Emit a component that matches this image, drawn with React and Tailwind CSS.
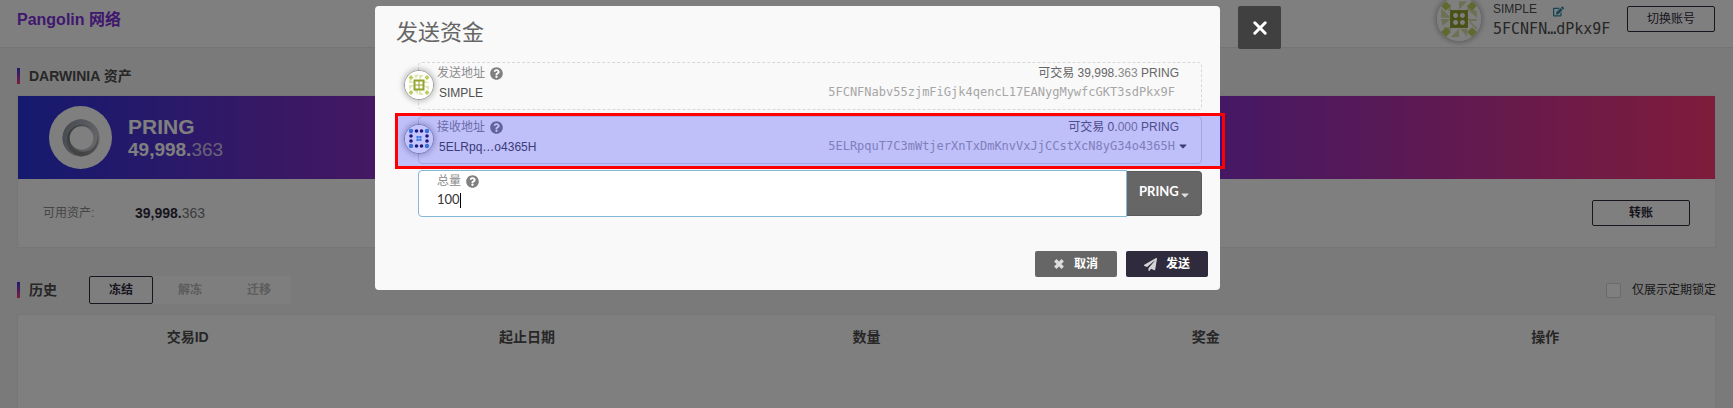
import { FaEdit, FaQuestionCircle, FaPaperPlane, FaCaretDown } from "react-icons/fa";

const columns = ["交易ID", "起止日期", "数量", "奖金", "操作"];

function SimpleIdenticon({ className }) {
  return (
    <svg viewBox="0 0 64 64" className={className} aria-hidden="true">
      <circle cx="32" cy="32" r="32" fill="#fff" />
      <path
        fill="#dbe3a8"
        d="M20 8v12h-4zM32 6h12L32 18zM44 20h12l-12-8zM6 16l14 14H6zM46 20h12v10zM6 32h14L8 42zM44 32l14 12v-12zM58 34v14L46 36zM20 58l12-12v12zM34 46h10v12zM20 44H8l12 6z"
      />
      <path
        fill="#c3d161"
        d="M13 6l7 7-7 7-7-7zM51 6l7 7-7 7-7-7zM13 44l7 7-7 7-7-7zM51 44l7 7-7 7-7-7z"
      />
      <rect x="19" y="19" width="26" height="26" fill="#94a32c" />
      <g fill="#fff">
        <circle cx="27" cy="27" r="3.6" />
        <circle cx="37" cy="27" r="3.6" />
        <circle cx="27" cy="37" r="3.6" />
        <circle cx="37" cy="37" r="3.6" />
      </g>
    </svg>
  );
}

function SmallIdenticon({ className }) {
  return (
    <svg viewBox="0 0 28 28" className={className} aria-hidden="true">
      <circle cx="14" cy="14" r="14" fill="#fff" />
      <path
        fill="#dfe7b8"
        d="M4 8l5 4H4zM9 4l5-1-3 5zM14 4h5l-5 5zM19 9l5 3h-5zM4 14h5l-5 5zM19 15l5 4v-4zM9 19h4l0 5zM14 19l5 5h-5z"
      />
      <path
        fill="#bccb5a"
        d="M6 4l2.500 2.500L6 9 3.500 6.500zM22 4l2.500 2.500L22 9l-2.500-2.500zM6 19l2.500 2.500L6 24l-2.500-2.500zM22 19l2.500 2.500L22 24l-2.500-2.500z"
      />
      <rect x="8.500" y="8.500" width="11" height="11" fill="#94a32c" />
      <path fill="#fff" d="M10.500 10.500h3v3h-3zM14.500 10.500h3v3h-3zM10.500 14.500h3v3h-3zM14.500 14.500h3v3h-3z" />
    </svg>
  );
}

const darkDots = [[11.5, 6], [16.5, 6], [11.5, 21], [16.5, 21], [6, 11], [6, 16], [22, 11], [22, 16]];
const cornerDots = [[6, 6], [22, 6], [6, 21], [22, 21]];

function DotsIdenticon({ className }) {
  return (
    <svg viewBox="0 0 28 28" className={className} aria-hidden="true">
      <circle cx="14" cy="14" r="14" fill="#fff" />
      {darkDots.map(([x, y]) => (
        <circle key={`${x}-${y}`} cx={x} cy={y} r="1.8" fill="#2a2050" />
      ))}
      {cornerDots.map(([x, y]) => (
        <circle key={`${x}-${y}`} cx={x} cy={y} r="2.2" fill="#4a94d0" />
      ))}
      <path
        fill="#4c9cd8"
        d="M11.500 11h2.200v2.200h-2.200zM14.300 11h2.200v2.200h-2.200zM11.500 13.800h2.200v2.200h-2.200zM14.300 13.800h2.200v2.200h-2.200z"
      />
    </svg>
  );
}

function RingLogo() {
  return (
    <svg viewBox="0 0 38 38" className="size-[38px]" aria-hidden="true">
      <defs>
        <linearGradient id="ringBase" x1="0" y1="0.5" x2="1" y2="0.5">
          <stop offset="0" stopColor="#8a8b8e" />
          <stop offset="0.5" stopColor="#858587" />
          <stop offset="1" stopColor="#a4a5a8" />
        </linearGradient>
        <linearGradient id="ringOuter" x1="0" y1="0.3" x2="1" y2="0.6">
          <stop offset="0" stopColor="#9098a4" />
          <stop offset="0.5" stopColor="#adb2bc" />
          <stop offset="1" stopColor="#cccfd4" />
        </linearGradient>
        <linearGradient id="ringInner" x1="0" y1="0.3" x2="1" y2="0.7">
          <stop offset="0" stopColor="#6c6c6e" />
          <stop offset="0.4" stopColor="#96999f" />
          <stop offset="0.7" stopColor="#babec6" />
          <stop offset="1" stopColor="#d0d2d6" />
        </linearGradient>
      </defs>
      <circle cx="19" cy="19" r="18.5" fill="url(#ringBase)" />
      <circle cx="20.5" cy="18" r="14.8" fill="url(#ringInner)" />
      <path
        fill="url(#ringOuter)"
        fillRule="evenodd"
        d="M19 .5a18.500 18.500 0 1 1 0 37a18.500 18.500 0 1 1 0-37zM20.500 5.500a15.800 15.800 0 1 0 0 31.600a15.800 15.800 0 1 0 0-31.600z"
      />
      <circle cx="19.5" cy="19" r="11.8" fill="#fff" />
    </svg>
  );
}

function SectionTitle({ children }) {
  return (
    <h2 className="flex items-center gap-[9px] text-sm leading-5 font-bold text-[#4e4e4e]">
      <span className="h-4 w-[3px] bg-linear-to-b from-[#3a30dd] via-[#9a30b8] to-[#fe3876]" />
      {children}
    </h2>
  );
}

function FieldLabel({ children, htmlFor }) {
  return (
    <label htmlFor={htmlFor} className="flex items-center gap-[5px] text-xs leading-5 text-[#8c8c8c]">
      {children}
      <FaQuestionCircle className="size-[13px] text-[#808080]" />
    </label>
  );
}

function AddressField({ id, label, name, whole, fraction, address, icon, caret, overlay, className }) {
  return (
    <div className={`relative flex h-12 justify-between rounded-sm border border-[#d8d8d8] pl-[18px] ${className}`}>
      <span className="absolute top-[7px] -left-[15px] size-[30px] rounded-full border border-[#999] bg-white shadow-[0_0_5px_2px_rgba(0,0,0,0.2)]">
        {icon}
      </span>
      <div>
        <FieldLabel htmlFor={id}>{label}</FieldLabel>
        <input
          id={id}
          readOnly
          value={name}
          className="block h-5 w-40 bg-transparent pl-[2px] text-xs text-[#4e4e4e] outline-none"
        />
      </div>
      <div>
        <div className="pr-[22px] text-right text-xs leading-5 text-[#666]">
          可交易 {whole}.<span className="opacity-75">{fraction}</span> PRING
        </div>
        <div className="flex h-[18px] items-center justify-end pr-[12px] font-['DejaVu_Sans_Mono',monospace] text-xs text-[#a6a6a6]">
          {address}
          <span className="flex w-[14px] justify-end">{caret}</span>
        </div>
      </div>
      {overlay}
    </div>
  );
}

export default function App() {
  return (
    <div className="relative h-screen overflow-hidden bg-[#f5f5f5] font-['Liberation_Sans','Noto_Sans_CJK_SC',sans-serif] text-[#4e4e4e]">
      <header className="flex h-12 items-start justify-between border-b border-[#e8e8e8] bg-white pr-[18px] pl-[17px]">
        <h1 className="pt-2 text-base leading-6 font-bold text-[#8030dd]">Pangolin 网络</h1>
        <div className="flex items-start">
          <div className="-mt-[3px] size-[44px] rounded-full bg-white shadow-[0_0_5px_2px_rgba(0,0,0,0.25)]">
            <SimpleIdenticon className="size-full" />
          </div>
          <div className="ml-3 w-[122px]">
            <div className="flex h-[18px] items-center gap-4 text-xs">
              SIMPLE
              <button type="button" aria-label="编辑">
                <FaEdit className="mt-1 size-[11px] text-[#2e8aaa]" />
              </button>
            </div>
            <div className="pt-px font-['DejaVu_Sans_Mono',monospace] text-[15px] leading-5">5FCNFN…dPkx9F</div>
          </div>
          <button
            type="button"
            className="mt-[6px] ml-3 h-[26px] w-[88px] rounded-xs border border-[#302b3c] text-xs text-[#302b3c]"
          >
            切换账号
          </button>
        </div>
      </header>

      <main className="px-[17px] pt-[18px]">
        <SectionTitle>DARWINIA 资产</SectionTitle>
        <section className="mt-[9px] border border-[#ededed] bg-white">
          <div className="flex h-[83px] items-center bg-[linear-gradient(90deg,#2a34dd_0%,#8a30c4_21%,#8830cc_70%,#fe3876_100%)] pl-[31px]">
            <div className="flex size-[63px] items-center justify-center rounded-full bg-white">
              <RingLogo />
            </div>
            <div className="ml-4 text-white">
              <div className="text-[21px] leading-6 font-bold">PRING</div>
              <div className="text-[19px] leading-[22px]">
                <b>49,998.</b>
                <span className="opacity-70">363</span>
              </div>
            </div>
          </div>
          <div className="flex h-[68px] items-center px-[25px]">
            <span className="w-[92px] text-xs text-[#8b8b8b]">可用资产:</span>
            <span className="text-sm">
              <b className="text-[#302b3c]">39,998.</b>
              <span className="text-[#777]">363</span>
            </span>
            <button
              type="button"
              className="ml-auto h-[26px] w-[98px] rounded-xs border border-[#302b3c] text-xs font-bold text-[#302b3c]"
            >
              转账
            </button>
          </div>
        </section>

        <div className="mt-7 flex items-center">
          <SectionTitle>历史</SectionTitle>
          <div className="ml-8 flex h-7 gap-[5px] rounded-xs bg-[#fdfdfd] text-xs font-bold">
            <button type="button" className="w-16 rounded-xs border border-[#302b3c] text-[#302b3c]">冻结</button>
            <button type="button" className="w-16 text-[#b8b8b8]">解冻</button>
            <button type="button" className="w-16 text-[#b8b8b8]">迁移</button>
          </div>
          <label className="ml-auto flex items-center gap-[11px] text-xs text-[#333]">
            <input type="checkbox" className="size-[15px] appearance-none rounded-xs border border-[#d4d4d5] bg-white" />
            仅展示定期锁定
          </label>
        </div>

        <section className="mt-[10px] h-40 border border-[#ededed] bg-white">
          <table className="w-full table-fixed text-sm">
            <thead>
              <tr>
                {columns.map((column) => (
                  <th key={column} className="h-11 font-bold">{column}</th>
                ))}
              </tr>
            </thead>
          </table>
        </section>
      </main>

      <div className="absolute inset-0 flex items-start justify-center gap-[18px] bg-black/50 pt-[6px] pr-[77px]">
        <div
          role="dialog"
          aria-labelledby="dialogTitle"
          className="w-full max-w-[845px] rounded-sm bg-[#f9f9f9] pt-[11px] pr-3 pb-[13px] pl-[21px]"
        >
          <h2 id="dialogTitle" className="text-[22px] leading-8 text-[#666]">发送资金</h2>
          <div className="mt-[13px] mr-[6px] ml-[22px] flex flex-col gap-[6px]">
            <AddressField
              id="sender"
              label="发送地址"
              name="SIMPLE"
              whole="39,998"
              fraction="363"
              address="5FCNFNabv55zjmFiGjk4qencL17EANygMywfcGKT3sdPkx9F"
              icon={<SmallIdenticon className="size-full" />}
              className="border-dashed"
            />
            <AddressField
              id="receiver"
              label="接收地址"
              name="5ELRpq…o4365H"
              whole="0"
              fraction="000"
              address="5ELRpquT7C3mWtjerXnTxDmKnvVxJjCCstXcN8yG34o4365H"
              icon={<DotsIdenticon className="size-full" />}
              caret={
                <button type="button" aria-label="选择地址">
                  <FaCaretDown className="size-3 text-[#4e4e4e]" />
                </button>
              }
              overlay={
                <div className="pointer-events-none absolute -top-1 -right-6 -bottom-[6px] -left-6 border-[3px] border-[#ff0000] bg-[rgba(0,0,255,0.23)]" />
              }
              className="border-solid"
            />
            <div className="flex h-[47px] items-center">
              <div className="h-full grow rounded-l-sm border border-[#85b7d9] bg-white pl-[18px]">
                <FieldLabel htmlFor="amount">总量</FieldLabel>
                <div className="flex h-[18px] items-center font-[Lato,sans-serif] text-[13px] text-[#333]">
                  <input id="amount" defaultValue="100" className="w-auto bg-transparent outline-none [field-sizing:content]" />
                  <span className="h-[15px] w-px bg-black" />
                </div>
              </div>
              <div className="relative">
                <select
                  aria-label="单位"
                  className="block h-[45px] w-[75px] appearance-none rounded-r-sm border border-l-0 border-[#5a5a5a] bg-[#666] pb-[3px] pl-3 font-[Lato,sans-serif] text-[13px] font-bold text-white"
                >
                  <option>PRING</option>
                </select>
                <FaCaretDown className="pointer-events-none absolute top-[18px] right-[11px] size-3 text-[#ddd]" />
              </div>
            </div>
          </div>
          <div className="mt-[34px] flex justify-end gap-[9px] text-xs font-bold text-white">
            <button type="button" className="flex h-[26px] w-[82px] items-center justify-center gap-[10px] rounded-xs bg-[#666]">
              <svg viewBox="0 0 10 10" className="size-[10px]" aria-hidden="true">
                <path d="M1.300 1.300L8.700 8.700M8.700 1.300L1.300 8.700" stroke="#dcdcdc" strokeWidth="3.4" />
              </svg>
              取消
            </button>
            <button type="button" className="flex h-[26px] w-[82px] items-center justify-center gap-[9px] rounded-xs bg-[#302b3c]">
              <FaPaperPlane className="size-[13px] text-[#d4d4d8]" />
              发送
            </button>
          </div>
        </div>
        <button
          type="button"
          aria-label="关闭"
          className="flex size-[43px] shrink-0 items-center justify-center rounded-xs bg-[#404040]"
        >
          <svg viewBox="0 0 14 14" className="size-[14px]" aria-hidden="true">
            <path d="M1.800 1.800L12.200 12.200M12.200 1.800L1.800 12.200" stroke="#fff" strokeWidth="3" strokeLinecap="round" />
          </svg>
        </button>
      </div>
    </div>
  );
}
